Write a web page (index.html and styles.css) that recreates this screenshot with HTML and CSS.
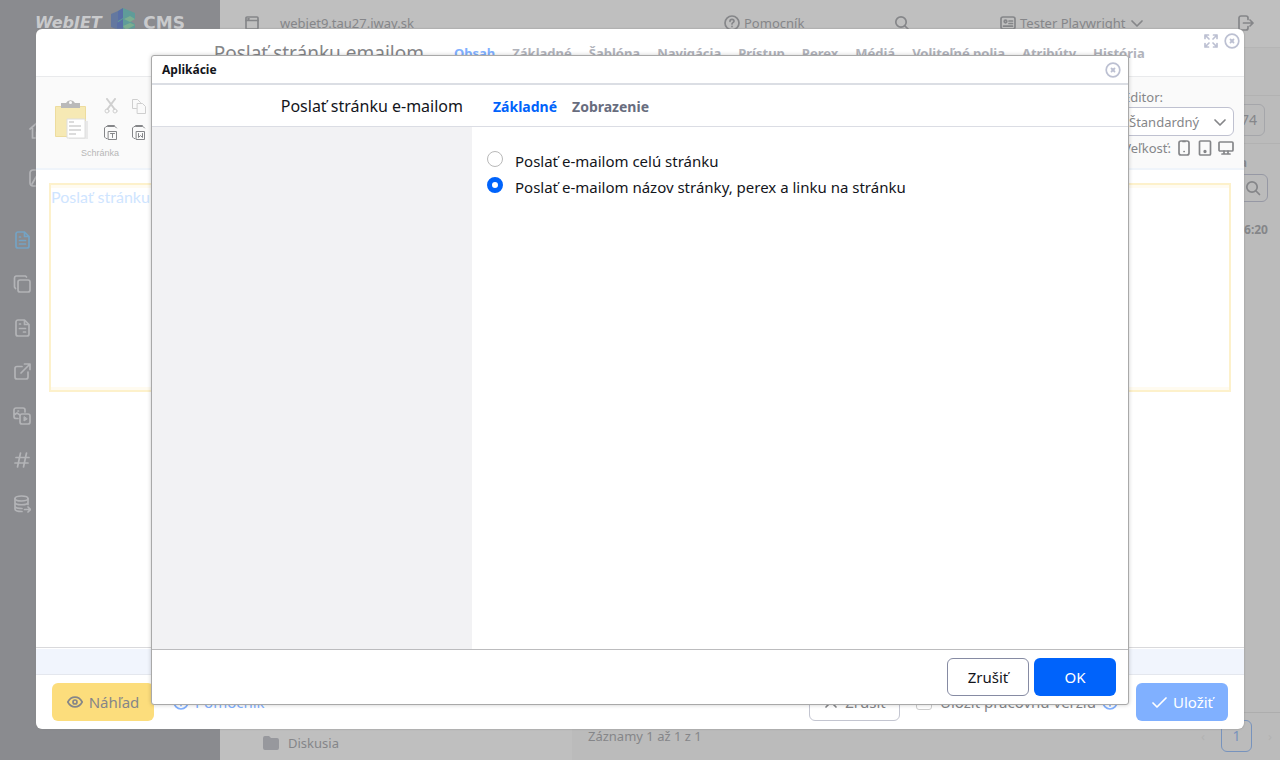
FILE: index.html
```html
<!DOCTYPE html>
<html lang="sk">
<head>
<meta charset="utf-8">
<title>WebJET CMS</title>
<link rel="stylesheet" href="styles.css">
</head>
<body>
<svg class="sprite" aria-hidden="true">
  <symbol id="help" viewBox="0 0 16 16"><circle cx="8" cy="8" r="7"/><path d="M6 6.3c0-1.200.9-1.900 2-1.900s2 .7 2 1.800c0 1.400-2 1.500-2 2.700M8 11.400v.2"/></symbol>
  <symbol id="search" viewBox="0 0 16 16"><circle cx="7" cy="7" r="5.200"/><path d="M11 11l3.500 3.500"/></symbol>
  <symbol id="chevron" viewBox="0 0 16 16"><path d="M3 6l5 5 5-5"/></symbol>
  <symbol id="close" viewBox="0 0 16 16"><circle cx="8" cy="8" r="6.800"/><path d="M6.500 6.500l3 3M9.500 6.500l-3 3" stroke-width="1.800"/></symbol>
</svg>

<div class="page">
  <aside class="sidebar">
    <div class="logo">
      <span class="logo-name">WebJET</span>
      <svg class="logo-cube" viewBox="0 0 26 24"><path d="M1 6l7-3 5 3v13l-5 3-7-3z" fill="#64789f"/><path d="M13 0l12 5v6l-5 2 5 3v4l-12 4-5-3V3z" fill="#5f9c99"/><path d="M8 3l5-3v10l-5 3zM7 15l6-4v13l-6-3z" fill="#596fa6"/><path d="M14 11l6-3 5 3-5 3zM13 18l7-3 5 2-9 5z" fill="#7cae90"/></svg>
      <span class="logo-cms">CMS</span>
    </div>
    <nav class="main-nav" aria-label="Hlavné menu">
      <a href="#" aria-label="Úvod"><svg viewBox="0 0 18 18"><path d="M1 8l8-7 8 7M3.500 7v10h4v-6h3v6h4V7"/></svg></a>
      <a href="#" aria-label="Web stránky"><svg viewBox="0 0 18 18"><rect x="1" y="1" width="16" height="16" rx="3"/><path d="M3 15l4-7 4 5 3-3"/></svg></a>
    </nav>
    <nav class="sub-nav" aria-label="Podmenu">
      <a class="active" href="#" aria-label="Stránky"><svg viewBox="0 0 18 18"><path d="M5 1h6.500L16 5.500V15a2 2 0 0 1-2 2H5a2 2 0 0 1-2-2V3a2 2 0 0 1 2-2zM11.500 1v4.500H16M6.500 6h1M6.500 9.500h6M6.500 13h6"/></svg></a>
      <a href="#" aria-label="Šablóny"><svg viewBox="0 0 18 18"><rect x="5" y="5" width="12" height="12" rx="2"/><path d="M2.500 13.500L1.500 12V3A2 2 0 0 1 3 1h9.500l1 1"/></svg></a>
      <a href="#" aria-label="Bloky"><svg viewBox="0 0 18 18"><path d="M5 1h6.500L16 5.500V15a2 2 0 0 1-2 2H5a2 2 0 0 1-2-2V3a2 2 0 0 1 2-2zM11.500 1v4.500H16M6.500 5h1M6.500 9.500h6M10.500 13h2"/></svg></a>
      <a href="#" aria-label="Presmerovania"><svg viewBox="0 0 18 18"><path d="M9 3.500H4a2 2 0 0 0-2 2V14a2 2 0 0 0 2 2h9a2 2 0 0 0 2-2V9M8 10l8.500-8.500M11.500 1H17v5.500"/></svg></a>
      <a href="#" aria-label="Médiá"><svg viewBox="0 0 18 18"><rect x="7" y="7" width="10" height="10" rx="2"/><path d="M5 11.500H3a2 2 0 0 1-2-2V3a2 2 0 0 1 2-2h7a2 2 0 0 1 2 2v2M1 8l3-2 3 2M5 4h.5"/><path d="M11 10v4l3-2z" fill="currentColor" stroke-width="1"/></svg></a>
      <a href="#" aria-label="Značky"><svg viewBox="0 0 18 18"><path d="M7.500 2l-3 14M13.500 2l-3 14M3 6.500h13M2 12h13"/></svg></a>
      <a href="#" aria-label="Atribúty"><svg viewBox="0 0 18 18"><ellipse cx="8.500" cy="3.500" rx="6.500" ry="2.500"/><path d="M2 3.500V14c0 2 4 2.500 7 2.500M2 7.500c0 3 13 3 13 0M2 11c0 2 4 2.500 7 2.500M15 3.500v6M11.500 14.500h6M15 12l2.500 2.500L15 17"/></svg></a>
    </nav>
  </aside>

  <div class="workspace">
    <header class="topbar">
      <a class="site" href="#"><svg class="icon" viewBox="0 0 16 16"><rect x="2" y="2" width="12" height="12" rx="1"/><path d="M2 5.500h12M4 3.800h1"/></svg>webjet9.tau27.iway.sk</a>
      <a class="top-item" href="#"><svg class="icon"><use href="#help"/></svg>Pomocník</a>
      <a class="top-item" href="#" aria-label="Hľadať"><svg class="icon"><use href="#search"/></svg></a>
      <a class="top-item" href="#"><svg class="icon" viewBox="0 0 16 16"><rect x="1" y="2" width="14" height="12" rx="2"/><circle cx="5.500" cy="6.500" r="1.300"/><path d="M9 6h3.500M9 8.500h3.500M3.500 11.200h9"/></svg>Tester Playwright<svg class="icon"><use href="#chevron"/></svg></a>
      <a class="top-item" href="#" aria-label="Odhlásiť"><svg class="icon" viewBox="0 0 16 16"><path d="M10 4.500V3a2 2 0 0 0-2-2H3a2 2 0 0 0-2 2v10a2 2 0 0 0 2 2h5a2 2 0 0 0 2-2v-1.500M5.500 8H15M12 5l3 3-3 3"/></svg></a>
    </header>
    <div class="panes">
      <section class="tree"><a href="#"><svg class="folder" viewBox="0 0 16 14"><path d="M2 0h4l2 2h6a2 2 0 0 1 2 2v8a2 2 0 0 1-2 2H2a2 2 0 0 1-2-2V2a2 2 0 0 1 2-2z"/></svg>Diskusia</a></section>
      <section class="list">
        <div class="list-bar"></div>
        <div class="list-bar"><button class="count" type="button">74</button></div>
        <div class="list-head">Zmena</div>
        <div class="filter"><button type="button" aria-label="Filtrovať"><svg class="icon"><use href="#search"/></svg></button></div>
        <div class="list-row">16:20</div>
        <footer class="list-foot"><span>Záznamy 1 až 1 z 1</span><nav class="pager" aria-label="Stránkovanie"><a href="#">‹</a><a class="current" href="#">1</a><a href="#">›</a></nav></footer>
      </section>
    </div>
  </div>
</div>

<section class="editor" aria-label="Editor stránky">
  <header class="editor-head">
    <h2>Poslať stránku emailom</h2>
    <nav class="tabs">
      <a class="active" href="#">Obsah</a><a href="#">Základné</a><a href="#">Šablóna</a><a href="#">Navigácia</a><a href="#">Prístup</a><a href="#">Perex</a><a href="#">Médiá</a><a href="#">Voliteľné polia</a><a href="#">Atribúty</a><a href="#">História</a>
    </nav>
    <div class="window-tools">
      <button type="button" aria-label="Zväčšiť"><svg class="icon" viewBox="0 0 16 16"><path d="M2 5.500V2h3.500M2 2l4 4M10.500 2H14v3.500M14 2l-4 4M2 10.500V14h3.500M2 14l4-4M10.500 14H14v-3.500M14 14l-4-4"/></svg></button>
      <button type="button" aria-label="Zavrieť editor"><svg class="icon"><use href="#close"/></svg></button>
    </div>
  </header>
  <div class="ribbon">
    <div class="clipboard">
      <div class="clip-tools">
        <button class="paste" type="button" aria-label="Prilepiť"><svg viewBox="0 0 34 42"><path d="M.5 8.500h30v30H.5z" fill="#f6e9b4" stroke="#eddc9e"/><path d="M6 5h5a5 5 0 0 1 9 0h5v5H6z" fill="#b9b9b9" stroke="none"/><circle cx="15.500" cy="4.500" r="1.500" fill="#fafafa" stroke="none"/><path d="M14 23h19v18H14z" fill="#e9e9e9" stroke="none"/><path d="M12 21h18v19H12z" fill="#fff" stroke="#dedede"/><path d="M14 24h5M14 28h12M14 32h12M14 36h7" stroke="#dcdcdc" stroke-width="2"/></svg></button>
        <button type="button" aria-label="Vystrihnúť"><svg class="faded" viewBox="0 0 16 16"><path d="M4 1l7.500 10M12 1L4.500 11" stroke-width="2"/><circle cx="4" cy="13" r="2"/><circle cx="12" cy="13" r="2"/></svg></button>
        <button type="button" aria-label="Kopírovať"><svg class="faded" viewBox="0 0 16 16"><path d="M5.500 10.500h-4v-9h5l3 3M6.500 5.500h5l3 3v7h-8z"/></svg></button>
        <button type="button" aria-label="Prilepiť ako text"><svg viewBox="0 0 16 16"><path d="M4 14.500H3l-1.500-1.500V4L3 2.500h1M12 2.500l1.500 1.500M5.500 7.500h8v8h-8zM7.500 9.500h4M9.500 9.500v4"/><path d="M5 2h6" stroke-width="2"/></svg></button>
        <button type="button" aria-label="Prilepiť z Wordu"><svg viewBox="0 0 16 16"><path d="M4 14.500H3l-1.500-1.500V4L3 2.500h1M12 2.500l1.500 1.500M5.500 7.500h8v8h-8zM7.500 9.500v4l2-2 2 2v-4"/><path d="M5 2h6" stroke-width="2"/></svg></button>
      </div>
      <span>Schránka</span>
    </div>
    <div class="view-options">
      <label for="editor-type">Editor:</label>
      <div class="select"><select id="editor-type"><option>Štandardný</option></select><svg class="icon"><use href="#chevron"/></svg></div>
      <div class="sizes">Veľkosť:
        <button type="button" aria-label="Mobil"><svg class="icon" viewBox="0 0 16 16"><rect x="3" y="1" width="10" height="14" rx="2"/><path d="M7 1.500h2M8 11.500h.2"/></svg></button>
        <button type="button" aria-label="Tablet"><svg class="icon" viewBox="0 0 16 16"><rect x="2.500" y="1" width="11" height="14" rx="1"/><circle cx="8" cy="11.500" r=".8"/></svg></button>
        <button type="button" aria-label="Počítač"><svg class="icon" viewBox="0 0 16 16"><rect x="1" y="2" width="14" height="9" rx="1"/><path d="M6 11v3M10 11v3M4 14h8"/></svg></button>
      </div>
    </div>
  </div>
  <div class="canvas"><div class="block">Poslať stránku emailom</div></div>
  <div class="path"></div>
  <footer class="editor-foot">
    <button class="btn preview" type="button"><svg class="icon" viewBox="0 0 16 16"><path d="M0.800 8c3.500-6.500 10.900-6.500 14.400 0-3.500 6.500-10.900 6.500-14.400 0z"/><circle cx="8" cy="8" r="2"/></svg>Náhľad</button>
    <a class="help" href="#"><svg class="icon"><use href="#help"/></svg>Pomocník</a>
    <button class="btn outline" type="button"><svg class="icon" viewBox="0 0 16 16"><path d="M3 3l10 10M13 3L3 13"/></svg>Zrušiť</button>
    <label class="draft"><input type="checkbox">Uložiť pracovnú verziu</label>
    <svg class="icon info" viewBox="0 0 16 16"><circle cx="8" cy="8" r="7"/><path d="M8 7v5M8 4v.5"/></svg>
    <button class="btn save" type="button"><svg class="icon" viewBox="0 0 16 16"><path d="M2 9l4 4 9-9"/></svg>Uložiť</button>
  </footer>
</section>

<section class="dialog" role="dialog" aria-labelledby="dialog-title">
  <header class="dialog-head"><h1 id="dialog-title">Aplikácie</h1><button type="button" aria-label="Zavrieť"><svg class="icon"><use href="#close"/></svg></button></header>
  <div class="dialog-bar">
    <h2>Poslať stránku e-mailom</h2>
    <nav class="tabs"><a class="active" href="#">Základné</a><a href="#">Zobrazenie</a></nav>
  </div>
  <div class="dialog-body">
    <div class="dialog-side"></div>
    <form class="options">
      <label><input type="radio" name="content"><span>Poslať e-mailom celú stránku</span></label>
      <label><input type="radio" name="content" checked><span>Poslať e-mailom názov stránky, perex a linku na stránku</span></label>
    </form>
  </div>
  <footer class="dialog-foot"><button class="btn cancel" type="button">Zrušiť</button><button class="btn ok" type="button">OK</button></footer>
</section>
</body>
</html>
```
FILE: styles.css
```css
* { box-sizing: border-box; }

body {
  position: relative;
  height: 100vh;
  margin: 0;
  overflow: hidden;
  background: #bfbfbf;
  color: #858689;
  font: 14px/20px "Noto Sans", "Open Sans", sans-serif;
}

a { color: inherit; text-decoration: none; }
h1, h2 { margin: 0; font-weight: 400; }
button { padding: 0; border: 0; background: none; color: inherit; font: inherit; }
svg { display: block; flex: none; fill: none; stroke: currentColor; stroke-width: 1.7; stroke-linecap: round; stroke-linejoin: round; }
.sprite { position: absolute; width: 0; height: 0; }
.icon { width: 16px; height: 16px; }

/* Page */
.page { display: flex; height: 100%; }
.sidebar { flex: none; width: 220px; background: #8a8b8f; color: #b3b4b7; }
.logo { display: flex; align-items: center; gap: 7px; height: 46px; padding: 0 35px; color: #c9cacc; font: bold 17px/20px "DejaVu Sans", sans-serif; }
.logo-name { width: 69px; font-size: 16px; font-style: italic; }
.logo-cube { width: 26px; height: 24px; margin-top: -6px; stroke: none; }
.main-nav { display: flex; flex-direction: column; gap: 30px; padding: 75px 29px 0; }
.sub-nav { display: flex; flex-direction: column; gap: 26px; padding: 44px 13px 0; }
.sidebar nav svg { width: 18px; height: 18px; }
.sidebar .active { color: #74a3c4; }

.workspace { display: flex; flex: 1; flex-direction: column; min-width: 0; }
.topbar { display: grid; grid-template-columns: 1fr 170px 106px 238px 16px; align-items: center; flex: none; height: 48px; padding: 0 26px 2px 24px; border-bottom: 1px solid #b5b5b5; font-size: 13px; }
.top-item, .site { display: flex; align-items: center; gap: 4px; }
.site { gap: 20px; }
.panes { display: grid; grid-template-columns: 352px 1fr; flex: 1; }
.tree { display: flex; align-items: flex-end; padding: 0 43px 7px; font-size: 13px; }
.tree a { display: flex; align-items: center; gap: 9px; }
.folder { width: 16px; height: 14px; fill: #97989d; stroke: none; }
.list { display: flex; flex-direction: column; background: #bbb; }
.list-bar { display: flex; align-items: center; justify-content: flex-end; height: 48px; padding: 0 15px; border-bottom: 1px solid #b2b2b2; }
.count { height: 32px; padding: 0 7px; border: 1px solid #a5a6aa; border-radius: 6px; }
.list-head { padding: 8px 33px 2px; font-weight: 700; font-size: 13px; text-align: right; }
.filter { display: flex; justify-content: flex-end; padding: 0 12px; }
.filter button { display: grid; place-items: center; width: 30px; height: 28px; border: 1px solid #9698a4; border-radius: 0 6px 6px 0; }
.list-row { flex: 1; padding: 18px 12px; font-weight: 700; font-size: 12px; text-align: right; }
.list-foot { display: flex; align-items: center; justify-content: space-between; height: 48px; padding: 0 8px 2px 16px; border-top: 1px solid #adadad; font-size: 13px; }
.pager { display: flex; align-items: center; gap: 16px; color: #b2b2b2; }
.pager .current { width: 31px; border: 1px solid #7793bd; border-radius: 6px; color: #7793bd; font-size: 14px; line-height: 30px; text-align: center; }

/* Shared tabs and buttons */
.tabs { display: flex; gap: 17px; color: #b1b3bb; font-weight: 700; font-size: 13px; white-space: nowrap; }
.tabs .active { color: #80b0ff; }
.btn { display: flex; align-items: center; justify-content: center; gap: 6px; height: 38px; border-radius: 6px; font-size: 15px; }

/* Editor window */
.editor { position: absolute; inset: 29px 36px 31px; display: flex; flex-direction: column; border-radius: 6px; background: #fff; box-shadow: 0 0 2px #888; }
.editor-head { position: relative; display: flex; align-items: center; gap: 30px; height: 48px; border-bottom: 1px solid #e9eaec; }
.editor-head h2 { width: 388px; font-size: 19px; text-align: right; white-space: nowrap; }
.window-tools { position: absolute; top: 4px; right: 4px; display: flex; gap: 5px; color: #bcc0d2; }
.ribbon { display: flex; justify-content: space-between; height: 93px; padding: 10px 10px 0 19px; border-bottom: 2px solid #eff4fa; background: #fafafa; }
.clip-tools { display: grid; grid-template-columns: 48px 28px 28px; grid-template-rows: 26px 26px; align-items: center; padding-top: 6px; }
.clip-tools svg { width: 16px; height: 16px; stroke-width: 1; }
.clip-tools .faded { color: #cfcfcf; }
.paste { grid-row: span 2; }
.clip-tools .paste svg { width: 34px; height: 42px; stroke-linecap: butt; }
.clipboard > span { display: block; width: 90px; padding-top: 2px; color: #b7b7b7; font: 9px/12px "Liberation Sans", Arial, sans-serif; text-align: center; }
.view-options { width: 115px; font-size: 13px; }
.view-options label { display: block; padding-left: 4px; }
.select { position: relative; }
.select select { width: 100%; height: 29px; padding: 0 9px; border: 1px solid #bfc1d0; border-radius: 6px; appearance: none; background: #fff; color: inherit; font: inherit; }
.select svg { position: absolute; top: 7px; right: 6px; }
.sizes { display: flex; align-items: center; justify-content: flex-end; gap: 5px; height: 24px; }
.canvas { flex: 1; padding: 13px; }
.block { height: 209px; border: 2px solid #fdf1cb; box-shadow: inset 0 3px #fffbf0, inset 0 -3px #fffbf0; color: #cfe5ff; font: 16px/24px Lato, sans-serif; }
.path { height: 28px; border-top: 1px solid #d9d9dc; border-bottom: 1px solid #e4e7ee; background: #f1f5fd; box-shadow: inset 0 1px #fff; }
.editor-foot { display: flex; align-items: center; height: 54px; padding: 0 16px; font-size: 15px; }
.preview { width: 102px; background: #fcdd7c; }
.help { display: flex; align-items: center; gap: 6px; margin: 0 auto 0 19px; color: #80b0ff; }
.outline { width: 91px; border: 1px solid #c3c5d0; }
.draft { display: flex; align-items: center; gap: 8px; margin: 0 6px 0 16px; }
.draft input { width: 16px; height: 16px; margin: 0; border: 1px solid #ccc; border-radius: 3px; appearance: none; }
.info { color: #80b0ff; }
.save { width: 92px; margin-left: 18px; background: #80b0ff; color: #fff; }

/* Application dialog */
.dialog { position: absolute; inset: 55px 151px; display: flex; flex-direction: column; border: 1px solid #a9a9a9; border-radius: 3px; background: #fff; color: #13151b; box-shadow: 0 0 4px #0003; font-size: 15px; }
.dialog-head { display: flex; align-items: center; justify-content: space-between; height: 29px; padding: 0 7px 0 10px; border-bottom: 2px solid #dbdee4; }
.dialog-head h1 { font-weight: 700; font-size: 12px; }
.dialog-head button { color: #bcc0d2; }
.dialog-bar { display: flex; align-items: center; gap: 30px; height: 42px; border-bottom: 1px solid #dbdde4; }
.dialog-bar h2 { width: 311px; font-size: 16px; text-align: right; }
.dialog-bar .tabs { gap: 15px; padding-top: 2px; color: #686d7e; font-size: 14px; }
.dialog-bar .tabs .active { color: #0063fb; }
.dialog-body { display: grid; grid-template-columns: 320px 1fr; flex: 1; }
.dialog-side { background: #f2f2f4; }
.options { padding: 21px 15px; }
.options label { display: flex; gap: 12px; height: 26px; line-height: 26px; }
.options input { width: 16px; height: 16px; margin: 3px 0; border: 1px solid #b9b9b9; border-radius: 50%; appearance: none; }
.options input:checked { border: 5px solid #0063fb; }
.dialog-foot { display: flex; align-items: center; justify-content: flex-end; gap: 5px; height: 55px; padding: 0 12px; border-top: 1px solid #bcbcbe; }
.dialog-foot .btn { width: 82px; }
.cancel { border: 1px solid #868ba3; }
.ok { background: #0063fb; color: #fff; }
```
